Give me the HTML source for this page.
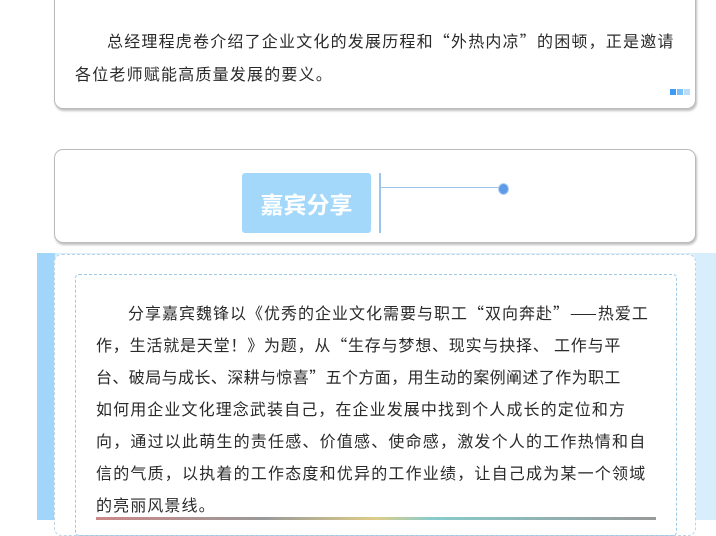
<!DOCTYPE html>
<html><head><meta charset="utf-8"><style>
body{margin:0;width:716px;height:520px;overflow:hidden;background:#fff;position:relative;font-family:"Noto Sans CJK SC","Liberation Sans",sans-serif;color:#2a2a2a}
.card{position:absolute;left:54px;width:640px;background:#fff;border:1px solid #bbb;border-radius:9px;box-shadow:1px 2px 2px rgba(0,0,0,.25)}
p{margin:0;font-size:16px;text-indent:2em}
.t div{white-space:nowrap;height:32px;letter-spacing:1.1px}
</style></head><body>
<div class="card" style="top:-20px;height:127px">
 <p style="position:absolute;left:20px;width:606px;top:43px;line-height:33px;letter-spacing:1.2px">总经理程虎卷介绍了企业文化的发展历程和“外热内凉”的困顿，正是邀请各位老师赋能高质量发展的要义。</p>
 <div style="position:absolute;right:5px;bottom:13px;display:flex;gap:1px"><i style="width:6px;height:6px;background:#3d9bf3"></i><i style="width:6px;height:6px;background:#7cc0f6"></i><i style="width:6px;height:6px;background:#b9dcfa"></i></div>
</div>
<div class="card" style="top:149px;height:92px">
 <div style="position:absolute;left:187px;top:23px;width:129px;height:60px;background:#a3d8fb;border-radius:3px;color:#fff;font-weight:bold;font-size:23px;line-height:60px;text-align:center">嘉宾分享</div>
 <div style="position:absolute;left:324px;top:23px;width:2px;height:60px;background:#9cc5ea"></div>
 <div style="position:absolute;left:326px;top:37px;width:122px;height:1px;background:#9cc5ea"></div>
 <div style="position:absolute;left:443px;top:33px;width:9px;height:10px;border-radius:50%;background:#5e9ae6;border:1px solid #b5d2f2"></div>
</div>
<div style="position:absolute;left:37px;top:253px;width:679px;height:267px;background:#d8eefc"></div>
<div style="position:absolute;left:37px;top:253px;width:18px;height:267px;background:#a2d5fa"></div>
<div style="position:absolute;left:54px;top:254px;width:640px;height:280px;background:#fff;border:1px dashed #bcd3e4;border-radius:8px"></div>
<div style="position:absolute;left:75px;top:274px;width:600px;height:260px;border:1px dashed #9ec9e6;border-radius:4px"></div>
<div class="t" style="position:absolute;left:96px;top:296px;line-height:32px;font-size:16px">
<div style="text-indent:2em;letter-spacing:1px">分享嘉宾魏锋以《优秀的企业文化需要与职工“双向奔赴”——热爱工</div>
<div style="letter-spacing:0.8px">作，生活就是天堂！》为题，从“生存与梦想、现实与抉择、 工作与平</div>
<div style="letter-spacing:0.4px">台、破局与成长、深耕与惊喜”五个方面，用生动的案例阐述了作为职工</div>
<div>如何用企业文化理念武装自己，在企业发展中找到个人成长的定位和方</div>
<div style="letter-spacing:1.2px">向，通过以此萌生的责任感、价值感、使命感，激发个人的工作热情和自</div>
<div style="letter-spacing:1.2px">信的气质，以执着的工作态度和优异的工作业绩，让自己成为某一个领域</div>
<div>的亮丽风景线。</div>
</div>
<div style="position:absolute;left:96px;top:517px;width:560px;height:3px;background:linear-gradient(90deg,#c88,#999 30%,#dc8 50%,#8cc 60%,#999)"></div>
</body></html>
